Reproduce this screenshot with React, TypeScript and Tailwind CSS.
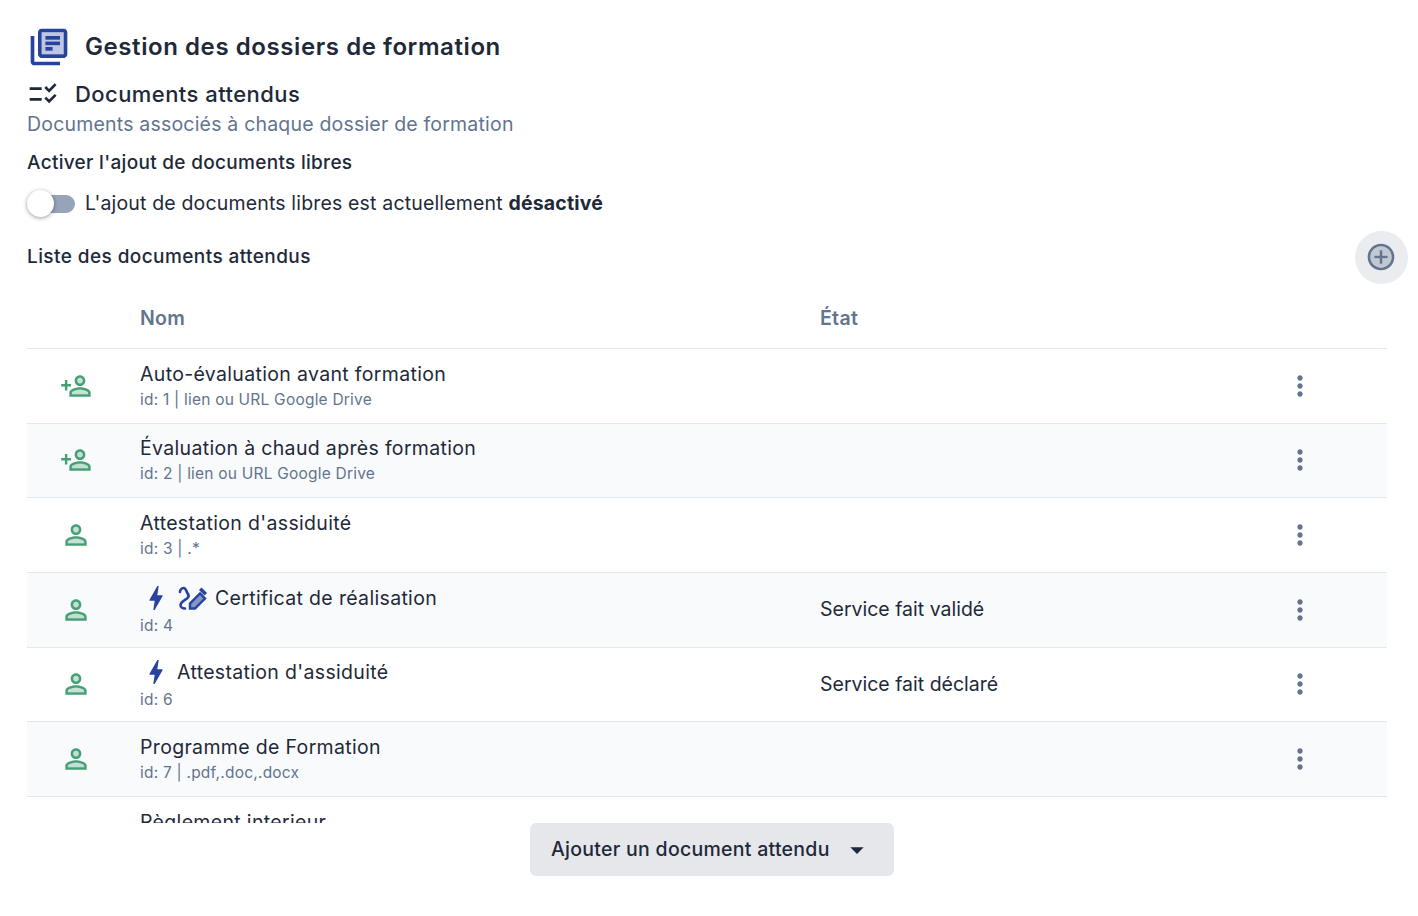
import React from 'react';

const BookIcon = () => (
  <svg viewBox="0 0 24 24" className="h-11 w-11 shrink-0 text-[#27429f]" fill="currentColor">
    <path d="M8 16h12V4H8v12zm2-10h8v2h-8V6zm0 3h8v2h-8V9zm0 3h4v2h-4v-2z" opacity=".3" />
    <path d="M4 22h14v-2H4V6H2v14c0 1.1.9 2 2 2zm4-4h12c1.1 0 2-.9 2-2V4c0-1.1-.9-2-2-2H8c-1.1 0-2 .9-2 2v12c0 1.1.9 2 2 2zM8 4h12v12H8V4zm2 5h8v2h-8zm0 3h4v2h-4zm0-6h8v2h-8z" />
  </svg>
);

const ChecklistIcon = () => (
  <svg viewBox="0 0 24 24" className="h-8 w-8 shrink-0 text-gray-800" fill="currentColor">
    <path d="M11 7H2v2h9V7zm0 8H2v2h9v-2zm5.6-4L13 7.46l1.41-1.41 2.12 2.12 4.24-4.24 1.41 1.41L16.6 11zm0 8L13 15.46l1.41-1.41 2.12 2.12 4.24-4.24 1.41 1.41L16.6 19z" />
  </svg>
);

const AddCircleIcon = () => (
  <svg viewBox="0 0 24 24" className="h-8 w-8 text-slate-500" fill="currentColor">
    <path d="M12 4c-4.41 0-8 3.59-8 8s3.59 8 8 8 8-3.59 8-8-3.59-8-8-8zm5 9h-4v4h-2v-4H7v-2h4V7h2v4h4v2z" opacity=".3" />
    <path d="M13 7h-2v4H7v2h4v4h2v-4h4v-2h-4zm-1-5C6.48 2 2 6.48 2 12s4.48 10 10 10 10-4.48 10-10S17.52 2 12 2zm0 18c-4.41 0-8-3.59-8-8s3.59-8 8-8 8 3.59 8 8-3.59 8-8 8z" />
  </svg>
);

const PersonPaths = () => (
  <>
    <circle cx="12" cy="8" opacity=".3" r="2.1" />
    <path d="M12 14.9c-2.97 0-6.1 1.46-6.1 2.1v1.1h12.2V17c0-.64-3.13-2.1-6.1-2.1z" opacity=".3" />
    <path d="M12 13c-2.67 0-8 1.34-8 4v3h16v-3c0-2.66-5.33-4-8-4zm6.1 5.1H5.9V17c0-.64 3.13-2.1 6.1-2.1s6.1 1.46 6.1 2.1v1.1zM12 12c2.21 0 4-1.79 4-4s-1.79-4-4-4-4 1.79-4 4 1.79 4 4 4zm0-6.1c1.16 0 2.1.94 2.1 2.1 0 1.16-.94 2.1-2.1 2.1-1.16 0-2.1-.94-2.1-2.1 0-1.16.94-2.1 2.1-2.1z" />
  </>
);

const PersonIcon = () => (
  <svg viewBox="0 0 24 24" className="h-8 w-8 text-[#46a075]" fill="currentColor">
    <PersonPaths />
  </svg>
);

const PersonAddIcon = () => (
  <svg viewBox="0 0 24 24" className="h-8 w-8 text-[#46a075]" fill="currentColor">
    <g transform="translate(3 0)">
      <PersonPaths />
    </g>
    <path d="M4 12V9H2.2v3H-.6v1.8h2.8v3H4v-3h2.8V12H4z" transform="translate(1.500 -1.500)" />
  </svg>
);

const BoltIcon = () => (
  <svg viewBox="0 0 24 24" className="h-8 w-8 shrink-0 text-[#27429f]" fill="currentColor">
    <path d="M11 21h-1l1-7H7.500c-.58 0-.57-.32-.38-.66.19-.34.05-.08.07-.12C8.480 10.940 10.420 7.540 13 3h1l-1 7h3.500c.49 0 .56.33.47.51l-.07.15C12.960 17.550 11 21 11 21z" />
  </svg>
);

const DrawIcon = () => (
  <svg viewBox="0 0 32 24" className="h-6 w-8 shrink-0 text-[#27429f]" fill="none" stroke="currentColor" strokeWidth="2.6">
    <path d="M4 6c0-2 1.500-4 3.500-4 3 0 2.500 4 4.500 6 1 1.500 1 3-1 4.500-3 2-6.500 3.500-6.500 6.500 0 2.500 2.500 3.500 4.500 3.500" strokeLinecap="round" />
    <path d="M14 22.500V17.500L24 7.500l5 5-10 10h-5z" fill="currentColor" fillOpacity="0.55" strokeWidth="2.4" />
    <path d="M25.500 1.500l5.500 5.500-2.500 2.500-5.500-5.500z" fill="currentColor" stroke="none" />
  </svg>
);

const DotsIcon = () => (
  <svg viewBox="0 0 24 24" className="h-8 w-8 text-slate-500" fill="currentColor">
    <path d="M12 8c1.100 0 2-.9 2-2s-.9-2-2-2-2 .9-2 2 .9 2 2 2zm0 2c-1.100 0-2 .9-2 2s.9 2 2 2 2-.9 2-2-.9-2-2-2zm0 6c-1.100 0-2 .9-2 2s.9 2 2 2 2-.9 2-2-.9-2-2-2z" />
  </svg>
);

interface Doc {
  title: string;
  sub: string;
  state?: string;
  add?: boolean;
  bolt?: boolean;
  draw?: boolean;
}

const docs: Doc[] = [
  { title: 'Auto-évaluation avant formation', sub: 'id: 1 | lien ou URL Google Drive', add: true },
  { title: 'Évaluation à chaud après formation', sub: 'id: 2 | lien ou URL Google Drive', add: true },
  { title: "Attestation d'assiduité", sub: 'id: 3 | .*' },
  { title: 'Certificat de réalisation', sub: 'id: 4', state: 'Service fait validé', bolt: true, draw: true },
  { title: "Attestation d'assiduité", sub: 'id: 6', state: 'Service fait déclaré', bolt: true },
  { title: 'Programme de Formation', sub: 'id: 7 | .pdf,.doc,.docx' },
  { title: 'Règlement interieur', sub: 'id: 8 | .pdf' },
];

export default function App() {
  return (
    <div className="flex h-screen flex-col overflow-hidden bg-white pl-[27px] pr-[21px] font-['Inter','Liberation_Sans',sans-serif] text-gray-800">
      <div className="mr-[10px] mt-[25px] flex h-11 items-center gap-[14px]">
        <BookIcon />
        <h1 className="text-[24px] font-semibold tracking-[0.024em]">Gestion des dossiers de formation</h1>
      </div>
      <div className="mt-[9px] flex h-8 items-center gap-4">
        <ChecklistIcon />
        <h2 className="text-[22px] font-medium tracking-[0.02em]">Documents attendus</h2>
      </div>
      <p className="h-7 text-[19.5px] leading-7 tracking-[0.01em] text-slate-500">
        Documents associés à chaque dossier de formation
      </p>
      <p className="mt-[11px] h-7 text-[19px] font-medium leading-7 tracking-[0.016em]">
        Activer l'ajout de documents libres
      </p>
      <div className="mt-[13px] flex h-7 items-center">
        <div className="relative h-7 w-[49px] shrink-0">
          <div className="absolute left-[3px] right-[1px] top-[5px] h-[18px] rounded-full bg-[#97a3b9]" />
          <div className="absolute left-0 top-0 h-[27px] w-[27px] rounded-full bg-white shadow-[0_1px_4px_rgba(0,0,0,0.4)]" />
        </div>
        <span className="ml-[9px] text-[19.5px] tracking-[0.0085em]">
          L'ajout de documents libres est actuellement <b className="font-bold">désactivé</b>
        </span>
      </div>
      <div className="mr-[10px] mt-[13px] flex h-[53px] shrink-0 items-center justify-between">
        <span className="text-[19px] font-medium tracking-[0.022em]">Liste des documents attendus</span>
        <button className="-mr-[21px] flex h-[53px] w-[53px] items-center justify-center rounded-full bg-[#ebecf0] pb-[2px] pr-[2px]">
          <AddCircleIcon />
        </button>
      </div>
      <div className="mr-[10px] mt-2 min-h-0 flex-1 overflow-hidden">
        <div className="flex h-[57px] items-center border-b border-[#e2e8f0] pb-[2px] text-[19.5px] font-semibold tracking-[0.016em] text-slate-500">
          <div className="ml-[113px] w-[680px]">Nom</div>
          <div>État</div>
        </div>
        {docs.map((doc, i) => (
          <div
            key={doc.sub}
            className={`flex h-[74.67px] items-center border-b border-[#e2e8f0] ${i % 2 === 1 ? 'bg-gray-50' : 'bg-white'}`}
          >
            <div className="flex w-[98px] shrink-0 justify-center">{doc.add ? <PersonAddIcon /> : <PersonIcon />}</div>
            <div className="ml-[15px] w-[680px] shrink-0">
              <div className="flex items-center text-[19.5px] leading-7 tracking-[0.017em]">
                {doc.bolt && <BoltIcon />}
                {doc.draw && <span className="ml-1"><DrawIcon /></span>}
                <span className={doc.draw ? 'ml-[7px]' : doc.bolt ? 'ml-[5px]' : ''}>{doc.title}</span>
              </div>
              <div className="text-[15.5px] leading-6 tracking-[0.014em] text-slate-500">{doc.sub}</div>
            </div>
            <div className="flex-1 text-[19.5px]">{doc.state}</div>
            <div className="mr-[71px] flex shrink-0 justify-center">
              <DotsIcon />
            </div>
          </div>
        ))}
      </div>
      <div className="flex h-[93px] shrink-0 justify-center">
        <button className="flex h-[53px] w-[364px] items-center rounded-md bg-gray-200 pl-[21px] text-[19.5px] font-medium tracking-[0.014em]">
          Ajouter un document attendu
          <svg viewBox="0 0 24 24" className="ml-[11px] h-8 w-8 text-gray-800" fill="currentColor">
            <path d="M7 10l5 5 5-5z" />
          </svg>
        </button>
      </div>
    </div>
  );
}
